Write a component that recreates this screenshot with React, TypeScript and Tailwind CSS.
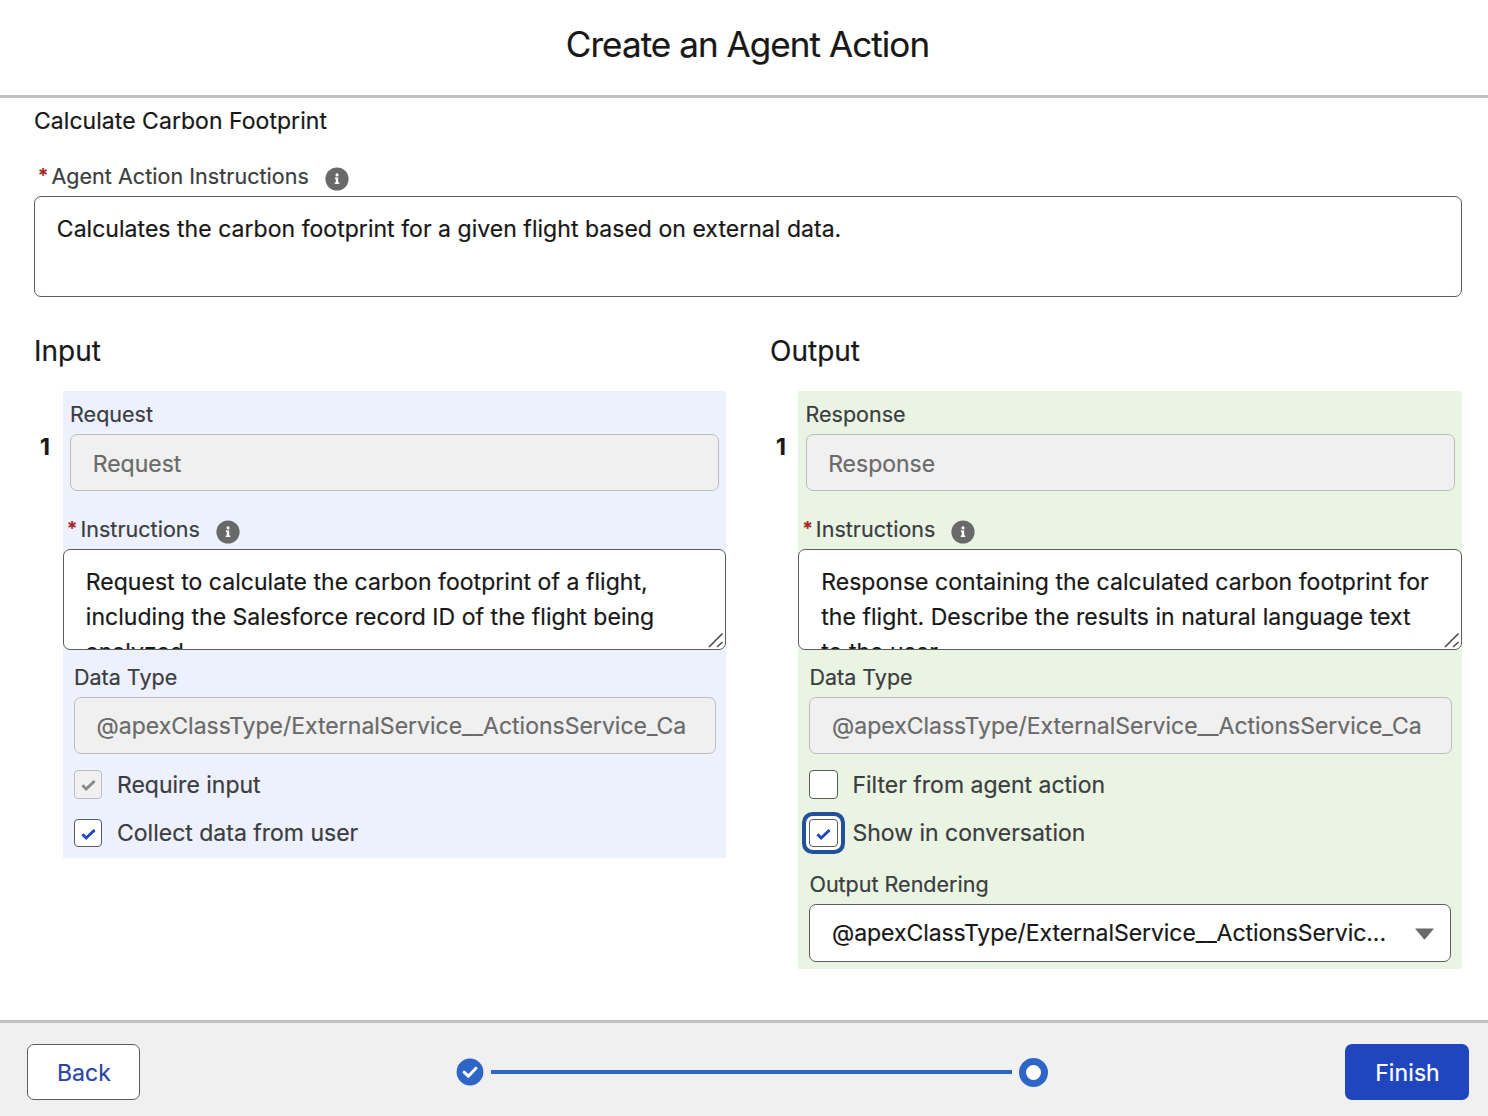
import React from "react";

function InfoIcon() {
  return (
    <svg className="mt-[5px] block h-6 w-6 shrink-0" viewBox="0 0 24 24">
      <circle cx="12" cy="12" r="11.6" fill="#696969" />
      <circle cx="12" cy="7.9" r="1.55" fill="#fff" />
      <path d="M9.9 10.5h3.3v4.9h1.1v1.6H9.7v-1.6h1.1v-3.3h-.9z" fill="#fff" />
    </svg>
  );
}

function FieldLabel({ children }: { children: React.ReactNode }) {
  return <div className="text-[21.5px] leading-[30px] whitespace-nowrap text-[#3b3d40]">{children}</div>;
}

function RequiredLabel({ children }: { children: React.ReactNode }) {
  return (
    <div className="flex h-[30px] items-center text-[21.5px] leading-[30px] tracking-[0.04px] whitespace-nowrap text-[#3b3d40]">
      <span className="w-[13.4px] shrink-0 text-[19px] leading-[30px] font-semibold text-[#a3241d]">*</span>
      <span className="mr-[16px]">{children}</span>
      <InfoIcon />
    </div>
  );
}

function ReadOnlyField({ children, inset }: { children: React.ReactNode; inset: string }) {
  return (
    <div
      className={`flex h-[57px] items-center overflow-hidden rounded-[7px] border border-[#bdbdc0] bg-[#f0f0f0] px-[21.6px] text-[23px] whitespace-nowrap text-[#6a6a6a] ${inset}`}
    >
      {children}
    </div>
  );
}

function TextArea({ lines, resizable }: { lines: string[]; resizable?: boolean }) {
  return (
    <div className="relative mt-[5px] h-[101px] overflow-hidden rounded-[7px] border border-[#5c5c5c] bg-white pt-[14.5px] pl-[21.8px] text-[23px] leading-[35px] tracking-[0.035px] whitespace-nowrap text-[#181818]">
      {lines.map((line) => (
        <div key={line}>{line}</div>
      ))}
      {resizable && (
        <svg className="absolute right-[1px] bottom-[1px] h-4 w-4" viewBox="0 0 16 16">
          <path d="M1 15L14.5 1.5M9 15l5.5-5" stroke="#4c4c4c" strokeWidth="1.6" fill="none" />
        </svg>
      )}
    </div>
  );
}

function CheckRow({ label, checked, disabled, focused }: { label: string; checked?: boolean; disabled?: boolean; focused?: boolean }) {
  const tone = disabled ? "border-[#bdbdc0] bg-[#f0f0f0] text-[#8a8a8a]" : "border-[#5c5c5c] bg-white text-[#2146bd]";
  const ring = focused ? "shadow-[0_0_0_3px_#fff,0_0_0_7px_#23509a]" : "";
  return (
    <div className="flex h-[48.4px] items-center">
      <span className={`flex h-[28.4px] w-[28.4px] shrink-0 items-center justify-center rounded-[4px] border ${tone} ${ring}`}>
        {checked && (
          <svg className="mt-[3px] h-[15px] w-[15px]" viewBox="0 0 16 16">
            <path d="M1.5 7.7l4 4L14.5 3.2" fill="none" stroke="currentColor" strokeWidth="3.2" />
          </svg>
        )}
      </span>
      <span className="mt-[1.6px] ml-[14.6px] text-[23px] leading-[35px] whitespace-nowrap text-[#3b3d40]">{label}</span>
    </div>
  );
}

interface ColumnProps {
  title: string;
  name: string;
  lines: string[];
  gutter: string;
  panel: string;
  children: React.ReactNode;
}

function Column({ title, name, lines, gutter, panel, children }: ColumnProps) {
  return (
    <section className="min-w-0 flex-1">
      <h2 className="text-[28px] leading-[34px] text-[#181818]">{title}</h2>
      <div className="mt-[23px] flex items-start">
        <div className={`mt-[39px] shrink-0 pl-[6px] text-[23px] leading-[34px] font-bold text-[#181818] ${gutter}`}>1</div>
        <div className={`min-w-0 flex-1 ${panel}`}>
          <div className="px-[7.1px] pt-[8px]">
            <FieldLabel>{name}</FieldLabel>
            <div className="mt-[5px]">
              <ReadOnlyField inset="pt-[3px]">{name}</ReadOnlyField>
            </div>
          </div>
          <div className="mt-[23px] pl-1">
            <RequiredLabel>Instructions</RequiredLabel>
          </div>
          <TextArea lines={lines} resizable />
          <div className="pt-[12px] pr-[10.4px] pl-[11px]">
            <FieldLabel>Data Type</FieldLabel>
            <div className="mt-[5px]">
              <ReadOnlyField inset="pt-[1px]">@apexClassType/ExternalService__ActionsService_Ca</ReadOnlyField>
            </div>
            <div className="pt-[6.2px]">{children}</div>
          </div>
        </div>
      </div>
    </section>
  );
}

export default function App() {
  return (
    <div className="flex h-[1116px] w-[1488px] flex-col overflow-hidden bg-white font-['Inter',sans-serif] [-webkit-text-stroke:0.2px]">
      <header className="flex h-[98px] shrink-0 items-center justify-center border-b-[3px] border-[#c1c1c1] pb-[6px] pl-[7px]">
        <h1 className="text-[35px] tracking-[-0.93px] text-[#181818]">Create an Agent Action</h1>
      </header>

      <main className="min-h-0 flex-1 pt-[6px] pr-[26px] pl-[34px]">
        <div className="text-[23px] leading-[34px] tracking-[0.04px] text-[#181818]">Calculate Carbon Footprint</div>
        <div className="mt-[23px] pl-[4px]">
          <RequiredLabel>Agent Action Instructions</RequiredLabel>
        </div>
        <TextArea lines={["Calculates the carbon footprint for a given flight based on external data."]} />

        <div className="mt-[37px] flex gap-11">
          <Column
            title="Input"
            name="Request"
            gutter="w-[29px]"
            panel="bg-[#edf1fe] pb-[1px]"
            lines={[
              "Request to calculate the carbon footprint of a flight,",
              "including the Salesforce record ID of the flight being",
              "analyzed.",
            ]}
          >
            <CheckRow label="Require input" checked disabled />
            <CheckRow label="Collect data from user" checked />
          </Column>
          <Column
            title="Output"
            name="Response"
            gutter="w-[28.45px]"
            panel="bg-[#e9f4e3] pb-[7px]"
            lines={[
              "Response containing the calculated carbon footprint for",
              "the flight. Describe the results in natural language text",
              "to the user.",
            ]}
          >
            <CheckRow label="Filter from agent action" />
            <CheckRow label="Show in conversation" checked focused />
            <div className="mt-[12px]">
              <FieldLabel>Output Rendering</FieldLabel>
            </div>
            <div className="mt-[5px] mr-[0.6px] flex h-[58px] items-center justify-between rounded-[7px] border border-[#5c5c5c] bg-white pr-4 pl-[21.6px] text-[23px] tracking-[-0.06px] whitespace-nowrap text-[#181818]">
              <span>@apexClassType/ExternalService__ActionsServic...</span>
              <svg className="mt-[2px] h-3 w-[19px]" viewBox="0 0 19 12">
                <path d="M1 .4h17c.5 0 .7.5.4.9L10 11.3a.7.7 0 0 1-1 0L.6 1.3C.3.9.5.4 1 .4z" fill="#696969" />
              </svg>
            </div>
          </Column>
        </div>
      </main>

      <footer className="flex h-24 shrink-0 items-center justify-between border-t-[3px] border-[#c1c1c1] bg-[#f0f0f0] pt-[12px] pr-[19px] pb-[7px] pl-[27px] text-[23px]">
        <button className="h-14 w-[113px] rounded-[7px] border border-[#5c5c5c] bg-white pt-[2px] pl-[1px] tracking-[0.1px] text-[#2a45a8]">Back</button>
        <div className="flex items-center pl-[19px]">
          <svg className="h-7 w-7" viewBox="0 0 28 28">
            <circle cx="14" cy="14" r="13.4" fill="#2e66c8" />
            <path d="M8.1 14.2l4.2 4L20 10.3" fill="none" stroke="#fff" strokeWidth="3" strokeLinecap="round" strokeLinejoin="round" />
          </svg>
          <div className="mx-[7px] h-1 w-[521px] bg-[#2e66c8]" />
          <div className="h-[29px] w-[29px] rounded-full border-[7px] border-[#2e66c8] bg-white" />
        </div>
        <button className="h-14 w-[124px] rounded-[7px] bg-[#1f46bd] pt-[2px] pl-[1px] tracking-[0.1px] text-white">Finish</button>
      </footer>
    </div>
  );
}
